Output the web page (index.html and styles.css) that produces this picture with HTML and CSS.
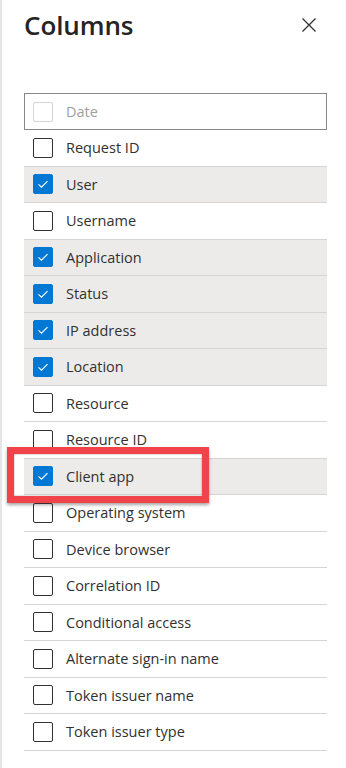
FILE: index.html
```html
<!DOCTYPE html>
<html lang="en">
<head>
  <meta charset="UTF-8">
  <meta name="viewport" content="width=device-width, initial-scale=1.0">
  <title>Columns</title>
  <link rel="stylesheet" href="styles.css">
</head>
<body>
  <div class="panel">
    <div class="header">
      <h1>Columns</h1>
      <button class="close" aria-label="Close">
        <svg width="16" height="16" viewBox="0 0 16 16"><path d="M1.5 1.5 L14.5 14.5 M14.5 1.5 L1.5 14.5" stroke="#323130" stroke-width="1.3" fill="none"/></svg>
      </button>
    </div>

    <div class="date-box">
      <span class="box disabled"></span>
      <span class="label">Date</span>
    </div>

    <ul class="list">
      <li class="row"><span class="box"></span><span class="label">Request ID</span></li>
      <li class="row on"><span class="box"></span><span class="label">User</span></li>
      <li class="row"><span class="box"></span><span class="label">Username</span></li>
      <li class="row on"><span class="box"></span><span class="label">Application</span></li>
      <li class="row on"><span class="box"></span><span class="label">Status</span></li>
      <li class="row on"><span class="box"></span><span class="label">IP address</span></li>
      <li class="row on"><span class="box"></span><span class="label">Location</span></li>
      <li class="row"><span class="box"></span><span class="label">Resource</span></li>
      <li class="row"><span class="box"></span><span class="label">Resource ID</span></li>
      <li class="row on marked"><span class="box"></span><span class="label">Client app</span><span class="highlight"></span></li>
      <li class="row"><span class="box"></span><span class="label">Operating system</span></li>
      <li class="row"><span class="box"></span><span class="label">Device browser</span></li>
      <li class="row"><span class="box"></span><span class="label">Correlation ID</span></li>
      <li class="row"><span class="box"></span><span class="label">Conditional access</span></li>
      <li class="row"><span class="box"></span><span class="label">Alternate sign-in name</span></li>
      <li class="row"><span class="box"></span><span class="label">Token issuer name</span></li>
      <li class="row"><span class="box"></span><span class="label">Token issuer type</span></li>
    </ul>
  </div>
</body>
</html>
```

FILE: styles.css
```css
body {
  margin: 0;
  background: #fff;
  font-family: "Open Sans", "Noto Sans", sans-serif;
  color: #323130;
}

.panel {
  border-left: 2px solid #e6e6e6;
  height: 768px;
  box-sizing: border-box;
  padding: 0 19px 0 22px;
}

.header {
  display: flex;
  justify-content: space-between;
  align-items: center;
  height: 50px;
  padding-top: 0;
}

.header h1 {
  margin: 0;
  font-size: 26px;
  font-weight: 600;
  letter-spacing: -0.1px;
  color: #252423;
}

.close {
  border: 0;
  background: none;
  padding: 0;
  margin-right: 10px;
  width: 16px;
  height: 16px;
  cursor: pointer;
}

.date-box {
  margin-top: 43px;
  height: 35px;
  border: 1px solid #8a8886;
  display: flex;
  align-items: center;
  padding-left: 8px;
}

.date-box .label {
  color: #a19f9d;
}

.list {
  list-style: none;
  margin: 0;
  padding: 0;
}

.row {
  position: relative;
  height: 35.5px;
  border-bottom: 1px solid #d6d4d2;
  display: flex;
  align-items: center;
  padding-left: 9px;
}

.row.on {
  background: #edebe9;
}

.box {
  width: 18px;
  height: 18px;
  border: 1px solid #323130;
  border-radius: 2px;
  flex-shrink: 0;
  box-sizing: content-box;
}

.box.disabled {
  border-color: #d6d4d2;
}

.row.on .box {
  background: #0078d4;
  border-color: #0078d4;
  background-image: url("data:image/svg+xml,%3Csvg xmlns='http://www.w3.org/2000/svg' width='18' height='18' viewBox='0 0 18 18'%3E%3Cpath d='M4.5 9.3 L7.5 12.2 L13.5 6.2' stroke='white' stroke-width='1.1' fill='none'/%3E%3C/svg%3E");
}

.label {
  margin-left: 13px;
  font-size: 14.5px;
}

.highlight {
  position: absolute;
  left: -17px;
  top: -12px;
  width: 188px;
  height: 42px;
  border: 7px solid #f0434a;
  box-shadow: 0 2px 3px rgba(0, 0, 0, 0.35), inset 0 0 2px rgba(0, 0, 0, 0.4);
}
```
